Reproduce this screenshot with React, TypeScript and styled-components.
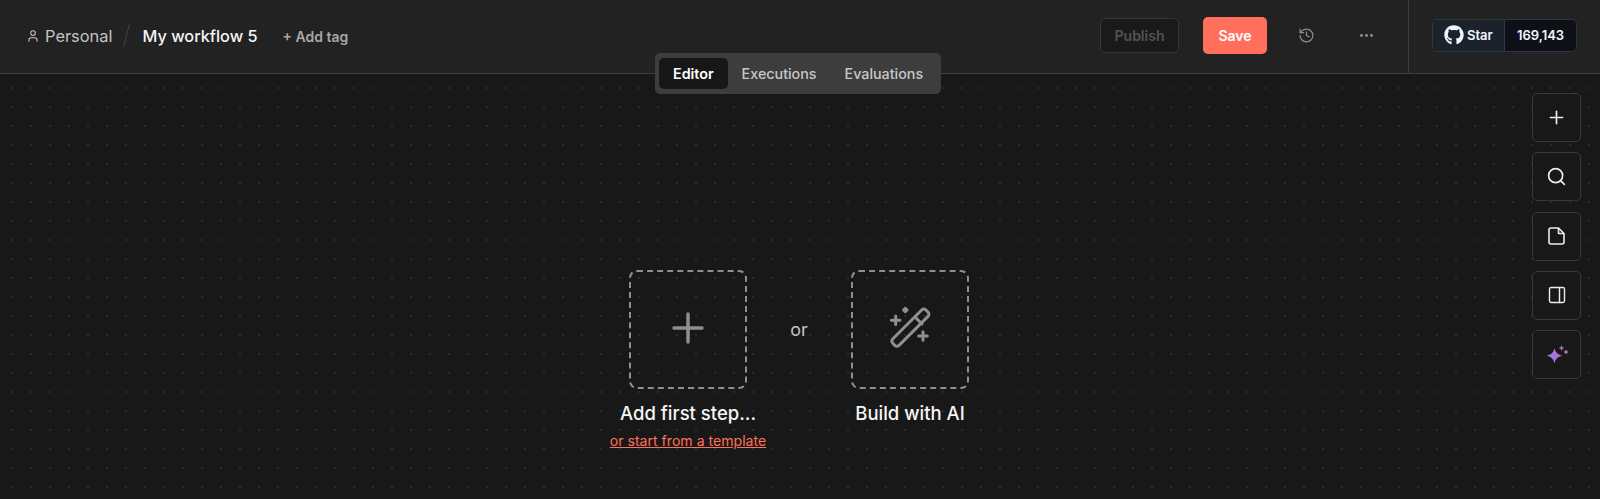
import { Ellipsis, History, PanelRight, Plus, Search, User } from "lucide-react";
import { FaGithub } from "react-icons/fa";
import styled, { createGlobalStyle } from "styled-components";

const GlobalStyle = createGlobalStyle`
    html, body {
        margin: 0;
        padding: 0;
        height: 100%;
        background: #181818;
        font-family: Inter, "Liberation Sans", sans-serif;
        overflow: hidden;
    }
    #root {
        height: 100%;
    }
`;

const WandIcon = () => (
    <svg width="44" height="44" viewBox="0 0 44 44" fill="none" stroke="currentColor" strokeWidth="3" strokeLinejoin="round" strokeLinecap="round">
        <rect x="-4.500" y="-24" width="9" height="47" rx="3" transform="translate(22 22) rotate(45)" />
        <path d="M27 11l7 7" />
        <path d="M7.700 10v8.600M3.400 14.300H12" />
        <path d="M35 25.700v8.600M30.700 30H39.300" />
        <path d="M17.300 1.700l2.300 2.300-2.300 2.300-2.300-2.300Z" fill="currentColor" strokeWidth="2" />
    </svg>
);

const NoteIcon = () => (
    <svg width="17" height="18" viewBox="0 0 17 18" fill="none" stroke="currentColor" strokeWidth="1.6" strokeLinejoin="round">
        <path d="M1 3C1 1.900 1.900 1 3 1H10.500L16 6.500V15C16 16.100 15.100 17 14 17H3C1.900 17 1 16.100 1 15Z" />
        <path d="M10.500 1V6.500H16" />
    </svg>
);

const SparkleIcon = () => (
    <svg width="24" height="24" viewBox="0 0 24 24">
        <defs>
            <linearGradient id="sparkle" x1="0" y1="1" x2="1" y2="0">
                <stop offset="0" stopColor="#8d7bf5" />
                <stop offset="1" stopColor="#c86bc0" />
            </linearGradient>
        </defs>
        <path fill="url(#sparkle)" d="M9.500 5c.9 4.400 2.900 6.500 8 7.700-5.100 1.200-7.100 3.300-8 7.700-.9-4.400-2.900-6.500-8-7.700 5.100-1.200 7.100-3.300 8-7.700Z" />
        <path fill="#c46bc4" d="M16.500 2l.8 2.200 2.200.8-2.200.8-.8 2.200-.8-2.200-2.200-.8 2.200-.8Z" />
        <circle cx="21" cy="9" r="1.800" fill="#c46bb0" />
    </svg>
);

const App = () => {
    return (
        <Page>
            <GlobalStyle />
            <Header>
                <HeaderLeft>
                    <Project>
                        <User size={14} strokeWidth={1.8} />
                        <span>Personal</span>
                    </Project>
                    <Slash />
                    <WorkflowName>My workflow 5</WorkflowName>
                    <AddTag>+ Add tag</AddTag>
                </HeaderLeft>
                <HeaderRight>
                    <PublishButton>Publish</PublishButton>
                    <SaveButton>Save</SaveButton>
                    <HeaderIcon $left={31}><History size={17} strokeWidth={1.7} /></HeaderIcon>
                    <HeaderIcon $left={43}><Ellipsis size={17} strokeWidth={2.2} /></HeaderIcon>
                </HeaderRight>
                <GithubArea>
                    <GithubBadge>
                        <GithubStar><FaGithub size={20} />Star</GithubStar>
                        <GithubCount>169,143</GithubCount>
                    </GithubBadge>
                </GithubArea>
            </Header>
            <Tabs>
                <Tab $active>Editor</Tab>
                <Tab>Executions</Tab>
                <Tab>Evaluations</Tab>
            </Tabs>
            <Canvas>
                <Center>
                    <Step>
                        <DashBox><Plus size={48} strokeWidth={1.75} /></DashBox>
                        <StepLabel>Add first step...</StepLabel>
                        <TemplateLink>or start from a template</TemplateLink>
                    </Step>
                    <OrText>or</OrText>
                    <Step>
                        <DashBox><WandIcon /></DashBox>
                        <StepLabel>Build with AI</StepLabel>
                    </Step>
                </Center>
                <Tools>
                    <ToolButton><Plus size={21} strokeWidth={1.9} /></ToolButton>
                    <ToolButton><Search size={21} strokeWidth={1.9} /></ToolButton>
                    <ToolButton><NoteIcon /></ToolButton>
                    <ToolButton><PanelRight size={20} strokeWidth={1.7} /></ToolButton>
                    <ToolButton><SparkleIcon /></ToolButton>
                </Tools>
            </Canvas>
        </Page>
    );
}

export default App;


const Page = styled.div`
    position: relative;
    display: flex;
    flex-direction: column;
    width: 100%;
    height: 100%;
`;

const Header = styled.div`
    display: flex;
    align-items: stretch;
    flex: 0 0 74px;
    box-sizing: border-box;
    background-color: #222222;
    border-bottom: 1px solid #3d3d3d;
`;

const HeaderLeft = styled.div`
    display: flex;
    align-items: center;
    flex: 1;
    padding: 0 0 2px 26px;
`;

const Project = styled.div`
    display: flex;
    align-items: center;
    gap: 5px;
    font-size: 16.400px;
    color: #c4c4c4;
`;

const Slash = styled.div`
    width: 1px;
    height: 23px;
    margin: 0 15px 0 14px;
    background-color: #444444;
    transform: rotate(14deg);
`;

const WorkflowName = styled.div`
    font-size: 16.300px;
    font-weight: 500;
    color: #f5f5f5;
`;

const AddTag = styled.div`
    margin: 1px 0 0 25px;
    font-size: 14px;
    font-weight: 600;
    color: #a8a8a8;
`;

const HeaderRight = styled.div`
    display: flex;
    align-items: center;
    padding: 0 0 3px 0;
`;

const PublishButton = styled.div`
    display: flex;
    align-items: center;
    justify-content: center;
    width: 79px;
    height: 35px;
    box-sizing: border-box;
    font-size: 14px;
    font-weight: 600;
    color: #525252;
    background-color: #1a1a1a;
    border: 1px solid #363636;
    border-radius: 5px;
`;

const SaveButton = styled.div`
    display: flex;
    align-items: center;
    justify-content: center;
    width: 64px;
    height: 37px;
    margin: 0 0 0 24px;
    font-size: 14px;
    font-weight: 600;
    color: #ffffff;
    background-color: #ff6f5c;
    border-radius: 5px;
`;

const HeaderIcon = styled.div<{
    $left: number;
}>`
    display: flex;
    margin: 0 0 0 ${props => props.$left}px;
    color: #8f8f8f;
`;

const GithubArea = styled.div`
    display: flex;
    align-items: center;
    box-sizing: border-box;
    width: 192px;
    margin: 0 0 0 33px;
    padding: 0 0 3px 23px;
    border-left: 1px solid #3d3d3d;
`;

const GithubBadge = styled.div`
    display: flex;
    height: 33px;
    box-sizing: border-box;
    border: 1px solid #30363d;
    border-radius: 5px;
    overflow: hidden;
    font-size: 13px;
    font-weight: 600;
    color: #f0f6fc;
`;

const GithubStar = styled.div`
    display: flex;
    align-items: center;
    gap: 3px;
    box-sizing: border-box;
    width: 72px;
    padding: 0 0 0 11px;
    background-color: #1b222b;
    border-right: 1px solid #30363d;
`;

const GithubCount = styled.div`
    display: flex;
    align-items: center;
    justify-content: center;
    width: 71px;
    background-color: #0d1117;
`;

const Tabs = styled.div`
    position: absolute;
    top: 53px;
    left: 655px;
    z-index: 2;
    display: flex;
    align-items: center;
    height: 41px;
    padding: 0 4px;
    box-sizing: border-box;
    background-color: #3d3d3d;
    border-radius: 5px;
`;

const Tab = styled.div<{
    $active?: boolean;
}>`
    display: flex;
    align-items: center;
    height: 31px;
    padding: 0 14px;
    font-size: 14.300px;
    font-weight: ${props => props.$active ? 600 : 500};
    color: ${props => props.$active ? '#ffffff' : '#c8c8c8'};
    background-color: ${props => props.$active ? '#171717' : 'transparent'};
    border-radius: 5px;
`;

const Canvas = styled.div`
    position: relative;
    flex: 1;
    background-color: #181818;
    background-image: radial-gradient(circle at 1px 1px, #2c2c2c 0.7px, transparent 0.9px);
    background-size: 19px 19px;
    background-position: 11px 13px;
`;

const Center = styled.div`
    display: flex;
    align-items: flex-start;
    justify-content: center;
    padding: 196px 0 0 0;
    margin: 0 0 0 -2px;
`;

const Step = styled.div`
    display: flex;
    flex-direction: column;
    align-items: center;
    width: 118px;
`;

const DashBox = styled.div`
    display: flex;
    align-items: center;
    justify-content: center;
    width: 118px;
    height: 119px;
    padding: 0 0 4px 0;
    box-sizing: border-box;
    color: #8f8f8f;
    border: 2px dashed #8f8f8f;
    border-radius: 8px;
`;

const StepLabel = styled.div`
    margin: 13px 0 0 0;
    font-size: 18.500px;
    font-weight: 500;
    line-height: 22px;
    color: #f5f5f5;
    white-space: nowrap;
`;

const TemplateLink = styled.div`
    margin: 8px 0 0 0;
    font-size: 14.100px;
    line-height: 18px;
    color: #ff6f5c;
    text-decoration: underline;
    white-space: nowrap;
`;

const OrText = styled.div`
    width: 104px;
    margin: 49px 0 0 0;
    font-size: 18px;
    text-align: center;
    color: #c4c4c4;
`;

const Tools = styled.div`
    position: absolute;
    top: 19px;
    right: 19px;
    display: flex;
    flex-direction: column;
    gap: 10.250px;
`;

const ToolButton = styled.div`
    display: flex;
    align-items: center;
    justify-content: center;
    width: 49px;
    height: 49px;
    box-sizing: border-box;
    color: #ececec;
    background-color: #181818;
    border: 1px solid #383838;
    border-radius: 5px;
`;
